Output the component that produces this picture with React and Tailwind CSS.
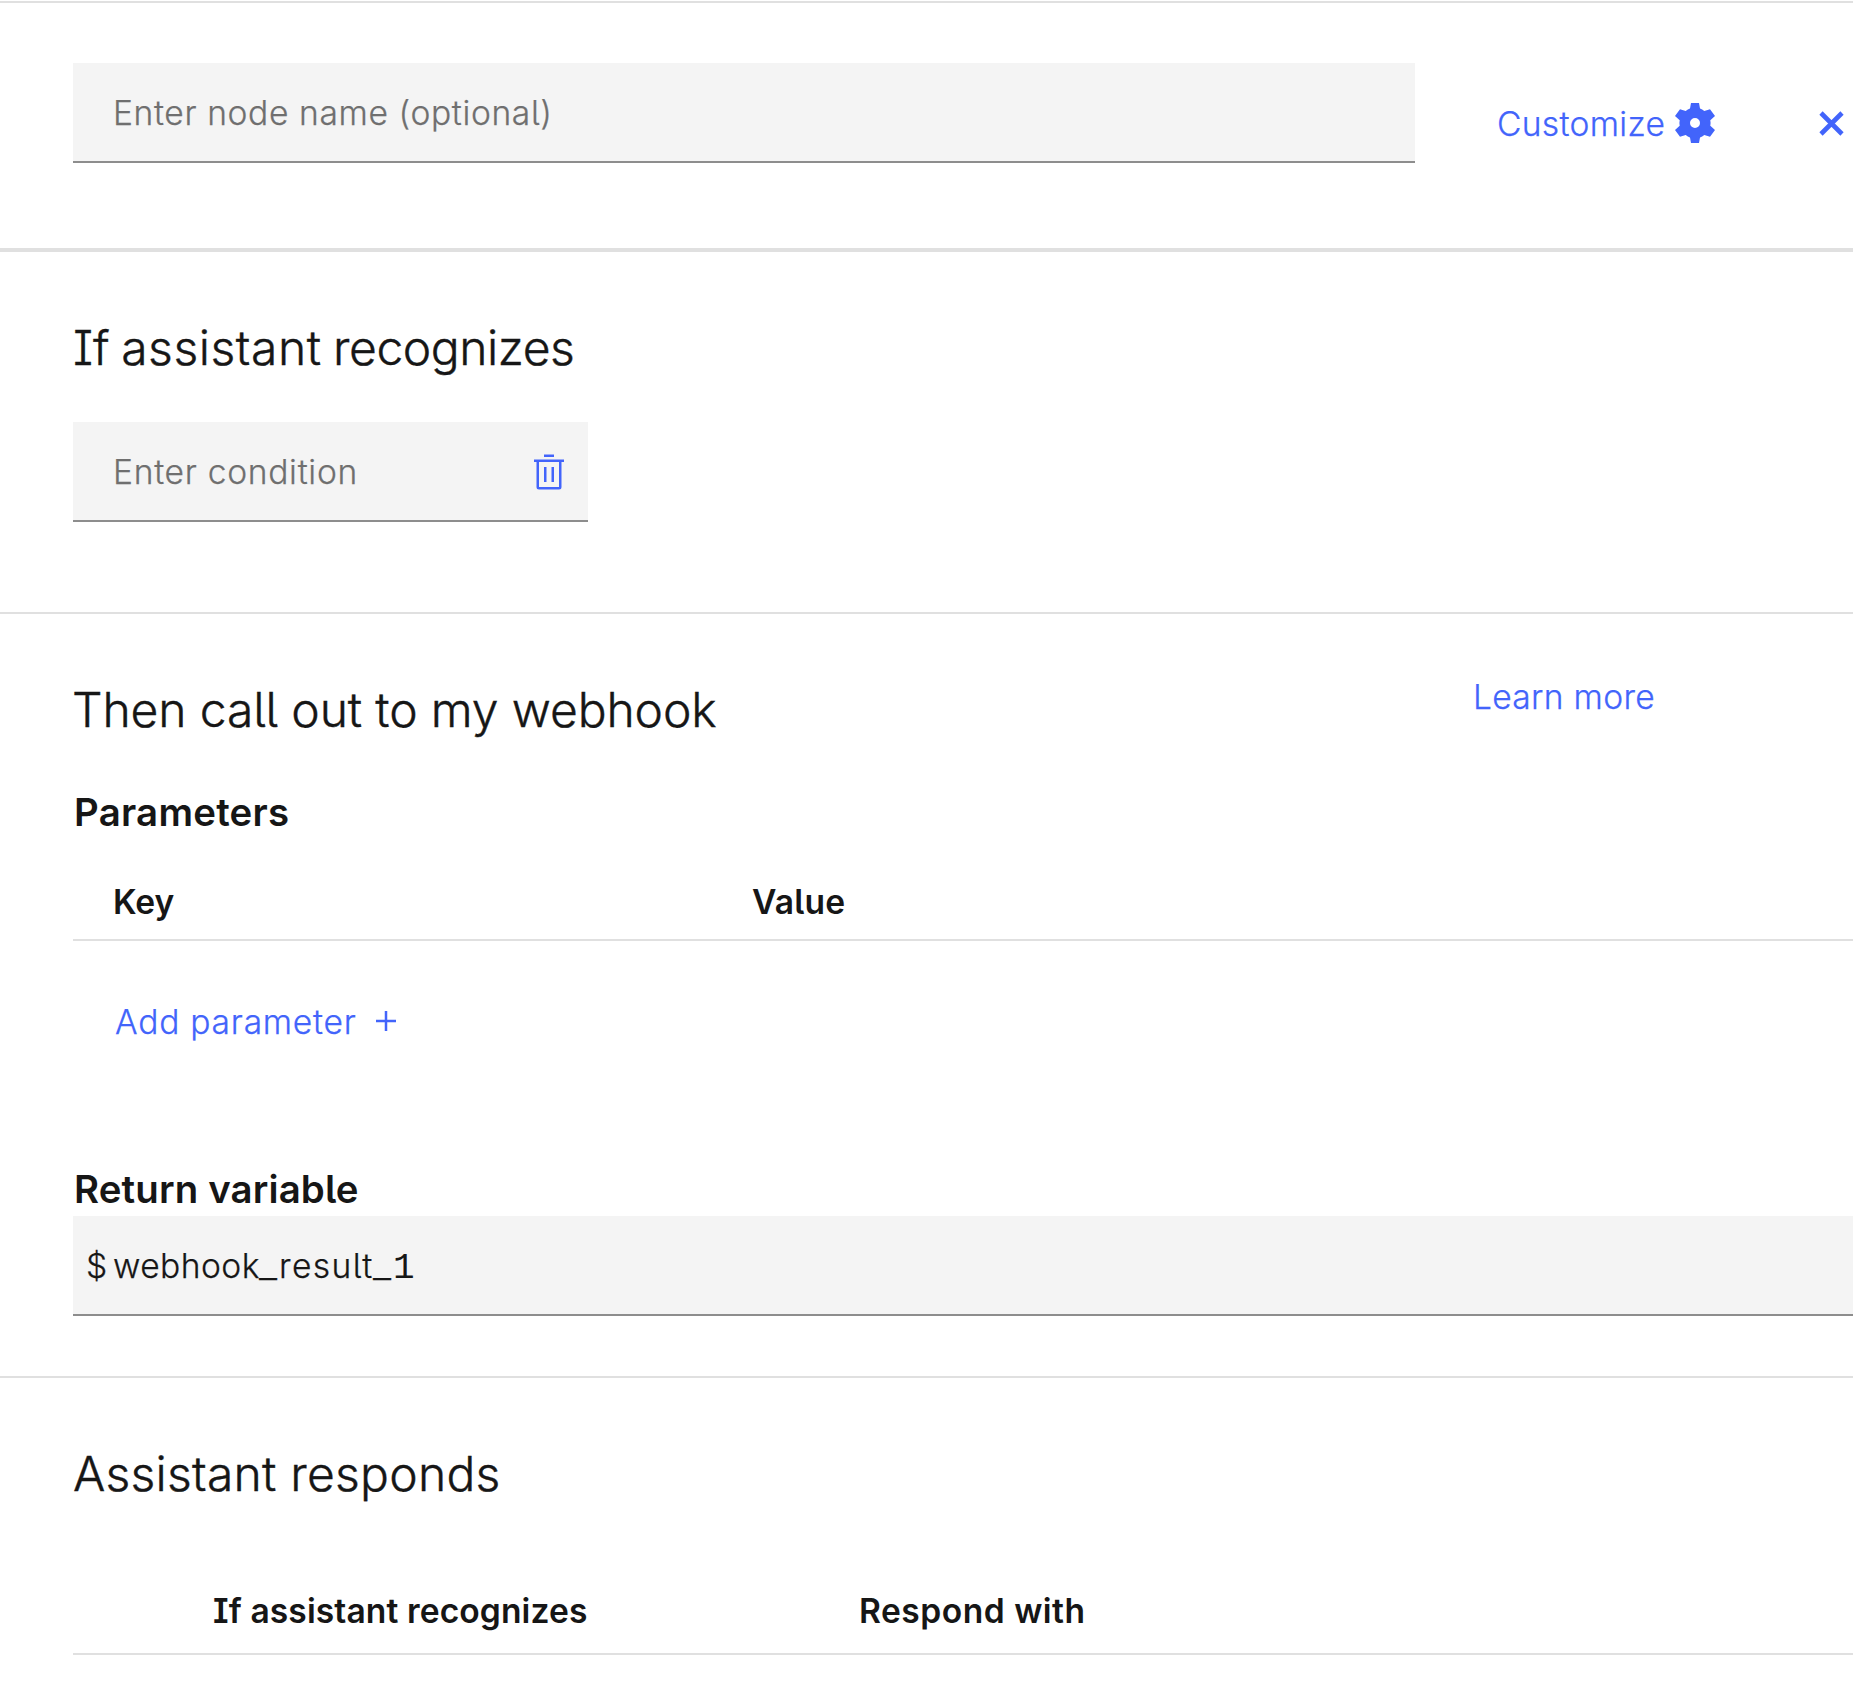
function GearIcon() {
  return (
    <svg className="size-10" viewBox="0 0 40 40" fill="currentColor" fillRule="evenodd" aria-hidden="true">
      <path d="M16 0H24L25 5.5Q27.2 6.3 29.3 8L35 6.3L40 13L35.3 17.2Q35.9 20 35.3 22.8L40 27L35 33.7L29.3 32Q27.2 33.7 25 34.5L24 40H16L15 34.5Q12.8 33.7 10.7 32L5 33.7L0 27L4.7 22.8Q4.1 20 4.7 17.2L0 13L5 6.3L10.7 8Q12.8 6.3 15 5.5ZM20 15A5 5 0 1 0 20 25A5 5 0 1 0 20 15Z" />
    </svg>
  );
}

function CloseIcon() {
  return (
    <svg className="size-[25px]" viewBox="0 0 25 25" fill="none" stroke="currentColor" strokeWidth="4.6" aria-hidden="true">
      <path d="M2 2L23 23M23 2L2 23" />
    </svg>
  );
}

function TrashIcon() {
  return (
    <svg className="size-10" viewBox="0 0 32 32" fill="currentColor" aria-hidden="true">
      <path d="M12 12h2v12h-2zM18 12h2v12h-2zM4 6v2h2v20a2 2 0 0 0 2 2h16a2 2 0 0 0 2-2V8h2V6zm4 22V8h16v20zM12 2h8v2h-8z" />
    </svg>
  );
}

function PlusIcon() {
  return (
    <svg className="size-5" viewBox="0 0 20 20" fill="none" stroke="currentColor" strokeWidth="2.5" aria-hidden="true">
      <path d="M10 0V20M0 10H20" />
    </svg>
  );
}

const field = "flex h-[100px] items-center border-b-2 border-[#8d8d8d] bg-[#f4f4f4]";
const heading = "text-[48px] leading-[60px] font-light [-webkit-text-stroke:0.4px]";
const label = "text-[38.4px] leading-[50px] font-semibold pl-px [-webkit-text-stroke:0]";
const column = "leading-10 font-semibold [-webkit-text-stroke:0]";

export default function App() {
  return (
    <div className="h-[1689px] w-full overflow-hidden bg-white pt-px font-['Inter','Liberation_Sans',sans-serif] text-[33.6px] leading-10 font-light whitespace-nowrap text-[#161616] [-webkit-text-stroke:0.25px] [font-feature-settings:'cv05','cv08']">
      <header className="flex h-[251px] items-start border-t-2 border-b-4 border-[#e0e0e0] pt-[60px] pl-[73px]">
        <div className={`${field} w-[1342px] shrink-0 pt-px pl-10 tracking-[0.62px] text-[#6f6f6f]`}>Enter node name (optional)</div>
        <button className="mt-10 ml-[82px] flex w-[218px] shrink-0 items-center justify-between text-[#4264fb]">
          <span className="pt-[2px] leading-[38px] tracking-[0.3px]">Customize</span>
          <GearIcon />
        </button>
        <button className="mt-[48px] ml-[104px] shrink-0 text-[#4264fb]" aria-label="Close">
          <CloseIcon />
        </button>
      </header>

      <section className="h-[362px] border-b-2 border-[#e0e0e0] pt-[66px] pl-[73px]">
        <h2 className={`${heading} [word-spacing:-2px]`}>
          If <span className="tracking-[0.55px]">assistant</span> <span className="tracking-[-0.45px]">recognizes</span>
        </h2>
        <div className={`${field} mt-[44px] w-[515px] justify-between pt-px pr-[19px] pl-10 text-[#6f6f6f]`}>
          <span className="tracking-[0.7px]">Enter condition</span>
          <button className="text-[#4264fb]" aria-label="Delete condition">
            <TrashIcon />
          </button>
        </div>
      </section>

      <section className="h-[764px] border-b-2 border-[#e0e0e0] pt-[66px] pl-[72px]">
        <div className="flex items-start">
          <h2 className={`${heading} w-[1401px] tracking-[-0.12px]`}>Then call out to my webhook</h2>
          <a className="mt-[-3px] tracking-[0.3px] text-[#4264fb]">Learn more</a>
        </div>
        <div className="pl-px">
          <h3 className={`${label} mt-[47px] tracking-[0.25px]`}>Parameters</h3>
          <div className="mt-[45px] grid grid-cols-[639px_1fr] border-b-2 border-[#e0e0e0] pb-[17px] pl-10">
            <span className={column}>Key</span>
            <span className={`${column} tracking-[0.2px]`}>Value</span>
          </div>
          <button className="mt-[61px] ml-[42px] flex w-[281px] items-start justify-between text-[#4264fb]">
            <span className="tracking-[0.75px]">Add parameter</span>
            <span className="pt-[9px]">
              <PlusIcon />
            </span>
          </button>
          <h3 className={`${label} mt-[122px] tracking-[0.15px]`}>Return variable</h3>
          <div className={`${field} mt-[2px] pt-[5px] pl-[13px]`}>
            <div className="flex items-baseline">
              <span className="w-[27px]">$</span>
              <span className="w-[146px] tracking-[0.45px]">webhook</span>
              <span className="w-5 origin-left scale-x-120">_</span>
              <span className="w-[94px] tracking-[1.4px]">result</span>
              <span className="w-5 origin-left scale-x-120">_</span>
              <span className="font-['Liberation_Mono',monospace] text-[36px] [-webkit-text-stroke:0]">1</span>
            </div>
          </div>
        </div>
      </section>

      <section className="pt-[66px] pl-[73px]">
        <h2 className={`${heading} tracking-[0.24px]`}>Assistant responds</h2>
        <div className="mt-[87px] grid grid-cols-[646px_1fr] border-b-2 border-[#e0e0e0] pb-[22px] pl-[140px]">
          <span className={`${column} tracking-[0.1px]`}>If assistant recognizes</span>
          <span className={`${column} tracking-[0.5px]`}>Respond with</span>
        </div>
      </section>
    </div>
  );
}
